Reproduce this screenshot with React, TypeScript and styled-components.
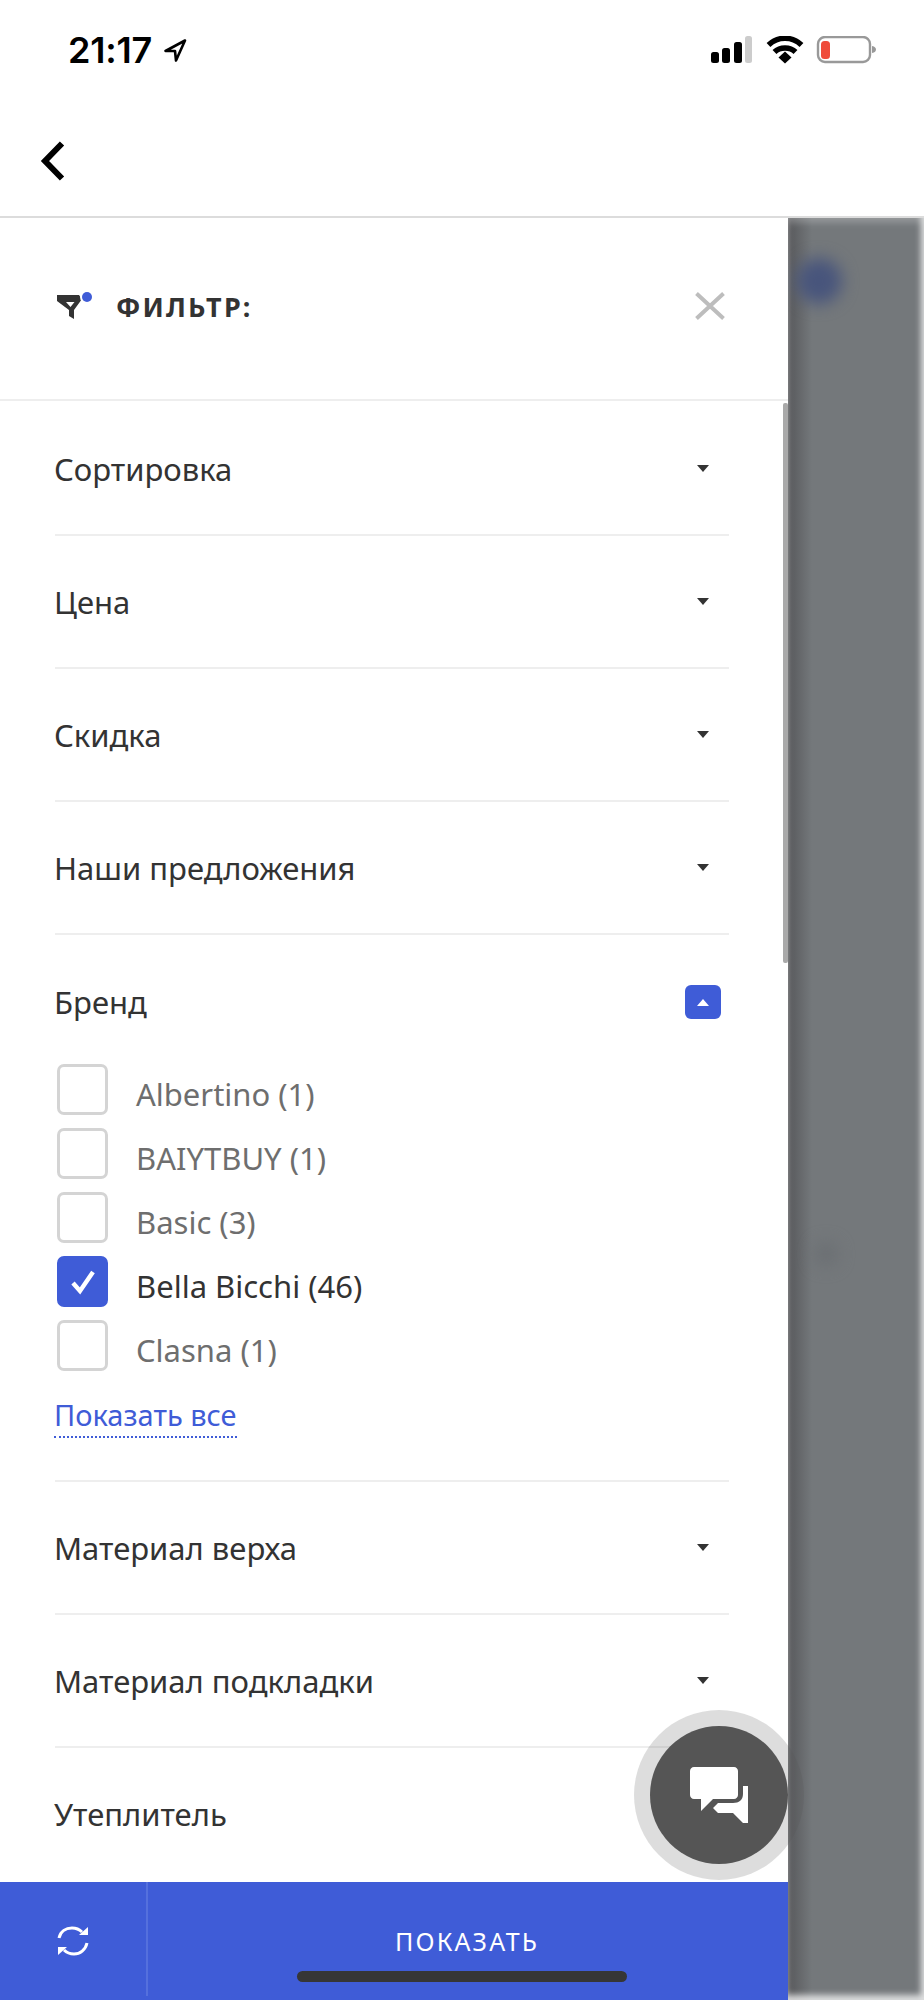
import React from "react";
import styled, { createGlobalStyle } from "styled-components";

const BLUE = "#3f5cd7";

const Global = createGlobalStyle`
  html, body { margin: 0; padding: 0; background: #fff; }
  #root { width: 924px; height: 2000px; overflow: hidden; }
  * { box-sizing: border-box; }
`;

const Page = styled.div`
  position: relative;
  width: 924px;
  height: 2000px;
  display: flex;
  flex-direction: column;
  background: #fff;
  font-family: "Noto Sans", "Open Sans", sans-serif;
  overflow: hidden;
`;

const StatusBar = styled.div`
  height: 100px;
  flex: none;
  display: flex;
  align-items: flex-start;
  justify-content: space-between;
  padding: 36px 47px 0 68px;
`;

const TimeGroup = styled.div`
  display: flex;
  align-items: center;
  gap: 11px;
  height: 28px;
`;

const Time = styled.span`
  font-family: "Inter", sans-serif;
  font-size: 36px;
  font-weight: 600;
  letter-spacing: -0.2px;
  line-height: 28px;
  color: #000;
`;

const StatusIcons = styled.div`
  display: flex;
  align-items: center;
  height: 28px;
`;

const NavBar = styled.div`
  height: 118px;
  flex: none;
  display: flex;
  align-items: center;
  padding: 5px 0 0 40px;
  border-bottom: 2px solid #dcdcdc;
`;

const Body = styled.div`
  flex: 1;
  display: flex;
  min-height: 0;
`;

const Panel = styled.div`
  position: relative;
  width: 788px;
  flex: none;
  display: flex;
  flex-direction: column;
  background: #fff;
`;

const Backdrop = styled.div`
  position: relative;
  flex: 1;
  background: #74787b;
  overflow: hidden;
  &::before {
    content: "";
    position: absolute;
    inset: 0 auto 0 0;
    width: 24px;
    background: linear-gradient(to right, #57585b, #74787b);
  }
  &::after {
    content: "";
    position: absolute;
    inset: 0;
    box-shadow: inset -3px -5px 6px rgba(255, 255, 255, 0.75), inset 0 5px 6px rgba(255, 255, 255, 0.22);
  }
`;

const Blob = styled.div<{ $x: number; $y: number; $size: number; $color: string }>`
  position: absolute;
  left: ${(p) => p.$x}px;
  top: ${(p) => p.$y}px;
  width: ${(p) => p.$size}px;
  height: ${(p) => p.$size}px;
  border-radius: 50%;
  background: ${(p) => p.$color};
  filter: blur(8px);
`;

const FilterHead = styled.div`
  height: 183px;
  flex: none;
  display: flex;
  align-items: center;
  justify-content: space-between;
  padding: 0 63px 5px 57px;
  border-bottom: 2px solid #eeeeee;
`;

const FilterTitleGroup = styled.div`
  display: flex;
  align-items: center;
  gap: 23px;
`;

const FilterTitle = styled.span`
  font-size: 27px;
  font-weight: 700;
  letter-spacing: 2.2px;
  color: #333;
`;

const Scroller = styled.div`
  position: relative;
  flex: 1;
  min-height: 0;
  overflow: hidden;
  padding: 2px 59px 0 55px;
`;

const ScrollThumb = styled.div`
  position: absolute;
  right: 0;
  top: 2px;
  width: 5px;
  height: 560px;
  background: #a9a9a9;
  border-radius: 2px;
`;

const Section = styled.div`
  border-bottom: 2px solid #eeeeee;
  &:last-child { border-bottom: none; }
`;

const SectionHead = styled.div<{ $open?: boolean }>`
  height: ${(p) => (p.$open ? 129 : 131)}px;
  display: flex;
  align-items: center;
  justify-content: space-between;
  padding: ${(p) => (p.$open ? "5px 8px 0 0" : "0 20px 0 0")};
`;

const SectionTitle = styled.span`
  margin-left: -1px;
  font-size: 31px;
  color: #333;
`;

const OpenButton = styled.div`
  width: 36px;
  height: 34px;
  border-radius: 6px;
  background: ${BLUE};
  display: flex;
  align-items: center;
  justify-content: center;
`;

const BrandList = styled.div`
  display: flex;
  flex-direction: column;
  gap: 13px;
  padding: 0 0 0 2px;
`;

const BrandRow = styled.div`
  display: flex;
  align-items: flex-start;
  gap: 28px;
  height: 51px;
`;

const Check = styled.div<{ $on?: boolean }>`
  width: 51px;
  height: 51px;
  flex: none;
  border-radius: 7px;
  border: 3px solid ${(p) => (p.$on ? BLUE : "#d4d4d4")};
  background: ${(p) => (p.$on ? BLUE : "#fff")};
  display: flex;
  align-items: center;
  justify-content: center;
`;

const BrandLabel = styled.span<{ $on?: boolean }>`
  font-size: 31px;
  line-height: 51px;
  padding-top: 5px;
  color: ${(p) => (p.$on ? "#333" : "#6e6e6e")};
`;

const ShowAll = styled.div`
  width: fit-content;
  margin: 25px 0 42px -1px;
  padding-bottom: 3px;
  font-size: 29px;
  line-height: 37px;
  color: ${BLUE};
  border-bottom: 2px dotted ${BLUE};
`;

const BottomBar = styled.div`
  height: 118px;
  flex: none;
  display: flex;
  background: ${BLUE};
`;

const ResetCell = styled.div`
  width: 148px;
  flex: none;
  height: 114px;
  display: flex;
  align-items: flex-start;
  justify-content: center;
  padding: 43px 0 0;
  border-right: 2px solid #5570dd;
`;

const ShowCell = styled.div`
  flex: 1;
  display: flex;
  justify-content: center;
  padding: 41px 2px 0 0;
  font-size: 25px;
  line-height: 36px;
  letter-spacing: 2.2px;
  color: #fff;
`;

const HomeIndicator = styled.div`
  position: absolute;
  left: 297px;
  bottom: 18px;
  width: 330px;
  height: 11px;
  border-radius: 6px;
  background: #363636;
`;

const ChatButton = styled.div`
  position: absolute;
  left: 650px;
  top: 1726px;
  width: 138px;
  height: 138px;
  border-radius: 50%;
  background: #555;
  box-shadow: 0 0 0 16px rgba(85, 85, 85, 0.2);
  display: flex;
  align-items: center;
  justify-content: center;
`;

const Caret = () => (
  <svg width="12" height="7" viewBox="0 0 12 7"><path d="M0 0h12L6 7z" fill="#333" /></svg>
);

const sections = ["Сортировка", "Цена", "Скидка", "Наши предложения"];
const after = ["Материал верха", "Материал подкладки", "Утеплитель"];
const brands = [
  { name: "Albertino (1)" },
  { name: "BAIYTBUY (1)" },
  { name: "Basic (3)" },
  { name: "Bella Bicchi (46)", on: true },
  { name: "Clasna (1)" },
];

export default function App() {
  return (
    <Page>
      <Global />
      <StatusBar>
        <TimeGroup>
          <Time>21:17</Time>
          <svg width="24" height="25" viewBox="0 0 24 25">
            <path d="M22 2.500 2.500 13h9.500l1 9.500z" fill="none" stroke="#000" strokeWidth="2.600" strokeLinejoin="round" />
          </svg>
        </TimeGroup>
        <StatusIcons>
          <svg width="166" height="28" viewBox="0 0 166 28">
            <rect x="0" y="16" width="8" height="11" rx="2.500" fill="#000" />
            <rect x="11" y="12" width="8" height="15" rx="2.500" fill="#000" />
            <rect x="23" y="6" width="8" height="21" rx="2.500" fill="#000" />
            <rect x="34" y="0" width="7" height="27" rx="2.500" fill="#ccc" />
            <path d="M57.500 9C67 0 81 0 90.500 9" fill="none" stroke="#000" strokeWidth="5.500" />
            <path d="M63.500 16C69 10.500 79 10.500 84.500 16" fill="none" stroke="#000" strokeWidth="5.500" />
            <path d="M67.500 21.500 74 15.500l6.500 6-6.500 6z" fill="#000" />
            <rect x="107" y="1" width="52" height="25" rx="7" fill="none" stroke="#999" strokeWidth="2.400" />
            <rect x="110" y="5" width="9" height="18" rx="3.500" fill="#ef4b3a" />
            <path d="M161 10c3 .5 4 2 4 3.500s-1 3-4 3.500z" fill="#999" />
          </svg>
        </StatusIcons>
      </StatusBar>
      <NavBar>
        <svg width="26" height="40" viewBox="0 0 26 40">
          <path d="M22 2.500 5 20l17 17.500" fill="none" stroke="#000" strokeWidth="6" />
        </svg>
      </NavBar>
      <Body>
        <Panel>
          <FilterHead>
            <FilterTitleGroup>
              <svg width="36" height="28" viewBox="0 0 36 28">
                <path fillRule="evenodd" d="M0 3h22l3 4-8 11v9l-5-3v-6L0 9zM9 10l4.500 5 4-5z" fill="#333" />
                <circle cx="30" cy="5" r="7" fill="#fff" />
                <circle cx="30" cy="5" r="5" fill={BLUE} />
              </svg>
              <FilterTitle>ФИЛЬТР:</FilterTitle>
            </FilterTitleGroup>
            <svg width="30" height="28" viewBox="0 0 30 28">
              <path d="M1.500 1.500 28.500 26.500M28.500 1.500 1.500 26.500" stroke="#bdbdbd" strokeWidth="4" />
            </svg>
          </FilterHead>
          <Scroller>
            <ScrollThumb />
            {sections.map((s) => (
              <Section key={s}>
                <SectionHead>
                  <SectionTitle>{s}</SectionTitle>
                  <Caret />
                </SectionHead>
              </Section>
            ))}
            <Section>
              <SectionHead $open>
                <SectionTitle>Бренд</SectionTitle>
                <OpenButton>
                  <svg width="12" height="7" viewBox="0 0 12 7"><path d="M0 7h12L6 0z" fill="#fff" /></svg>
                </OpenButton>
              </SectionHead>
              <BrandList>
                {brands.map((b) => (
                  <BrandRow key={b.name}>
                    <Check $on={b.on}>
                      {b.on && (
                        <svg width="28" height="26" viewBox="0 0 28 26">
                          <path d="M4 14l7 8L24 3" fill="none" stroke="#fff" strokeWidth="4.400" />
                        </svg>
                      )}
                    </Check>
                    <BrandLabel $on={b.on}>{b.name}</BrandLabel>
                  </BrandRow>
                ))}
              </BrandList>
              <ShowAll>Показать все</ShowAll>
            </Section>
            {after.map((s) => (
              <Section key={s}>
                <SectionHead>
                  <SectionTitle>{s}</SectionTitle>
                  <Caret />
                </SectionHead>
              </Section>
            ))}
          </Scroller>
          <BottomBar>
            <ResetCell>
              <svg width="32" height="32" viewBox="0 0 32 32">
                <path d="M2 13C3.500 6 9 3 15 3c4 0 7 1 10 4" fill="none" stroke="#fff" strokeWidth="3" />
                <path d="M30 18c-1.500 7-7 11-13 11-4 0-7-1-10-4" fill="none" stroke="#fff" strokeWidth="3" />
                <path d="M31 2v8h-9z" fill="#fff" />
                <path d="M1 30v-8h9z" fill="#fff" />
              </svg>
            </ResetCell>
            <ShowCell>ПОКАЗАТЬ</ShowCell>
          </BottomBar>
        </Panel>
        <Backdrop>
          <Blob $x={8} $y={40} $size={46} $color="#48557c" />
          <Blob $x={26} $y={1024} $size={24} $color="#6b6f73" />
        </Backdrop>
      </Body>
      <ChatButton>
        <svg width="58" height="56" viewBox="0 0 58 56">
          <path d="M4 0h40c2.200 0 4 1.800 4 4v24c0 2.200-1.800 4-4 4H23L11 44V32H4c-2.200 0-4-1.800-4-4V4c0-2.200 1.800-4 4-4z" fill="#fff" />
          <path d="M53 19v8c0 6-4 9-10 9H28l-5 5 5 5h15l10 10h5V19z" fill="#fff" />
        </svg>
      </ChatButton>
      <HomeIndicator />
    </Page>
  );
}
